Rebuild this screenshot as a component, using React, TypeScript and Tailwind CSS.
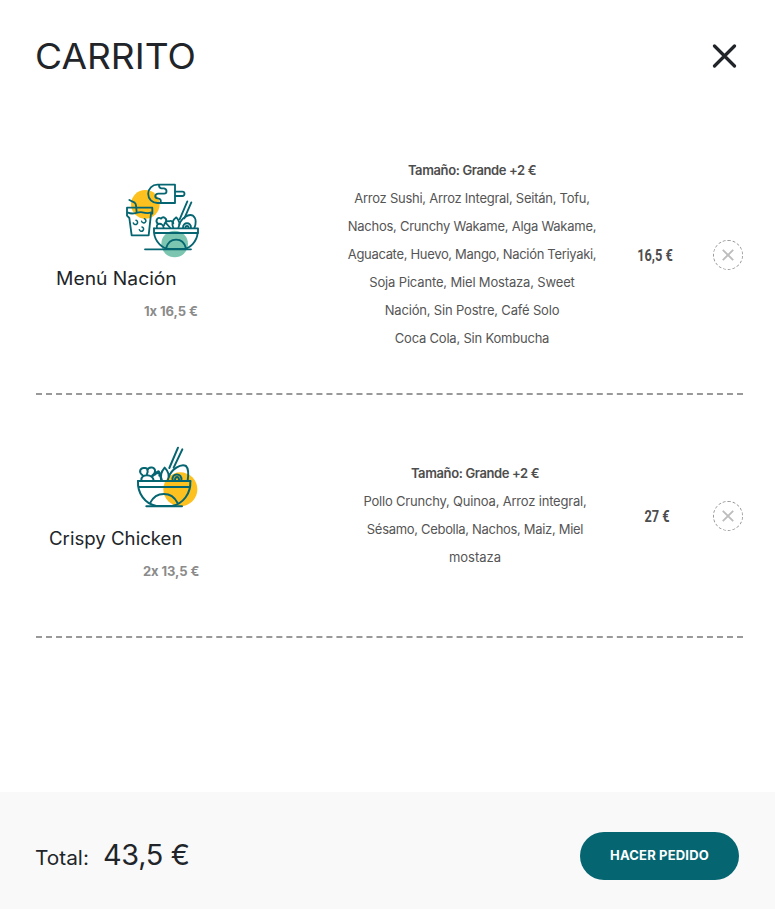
import type { ReactNode } from "react";

const TEAL = "#056571";

function ComboIcon() {
  return (
    <svg width="74" height="76" viewBox="48 36 222 228" fill="none" stroke={TEAL} strokeWidth="5.5" strokeLinecap="round" strokeLinejoin="round">
      <circle cx="106" cy="103" r="43" fill="#fcc01f" stroke="none" />
      <circle cx="194" cy="222" r="40" fill="#7cc5b1" stroke="none" />
      {/* ice lolly */}
      <path d="M195 44H142a27.500 27.500 0 0 0 0 55H195Z" />
      <path d="M196 65H217a6.500 6.500 0 0 1 0 13H196" />
      <path d="M147 45C147 51 148 54 154 55H162C172 57 172 70 162 71H145C133 72 133 84 143 85C151 86 154 90 152 98" />
      {/* drink */}
      <path d="M51 113H127V131H123L116 196H65L58 144L51 137Z" />
      <path d="M54 128C72 136 81 124 97 127C109 130 115 131 124 127" />
      <path d="M58 90L74 98Q77 100 78 106L80 126" />
      <path strokeWidth="4.6" d="M78 151a6.500 6.500 0 1 1 -8 8M103 146a6.500 6.500 0 1 1 -8 8M96 171a6.500 6.500 0 1 1 -8 8" />
      {/* bowl */}
      <path d="M132 175H264V189H136" />
      <path d="M132 175V188C135 217 159 236 177 237H221C239 235 261 216 263 188" />
      <path d="M105 238H243M168 235C178 200 219 200 228 235" />
      <path d="M232 94L209 148M244 97L223 145" />
      <path d="M141 174C136 157 160 157 161 174M144 162C133 151 145 138 153 146C160 137 173 146 167 156M162 166C164 157 171 151 178 154C184 150 189 156 190 160M166 157L181 174" />
      <path d="M190 174C183 158 192 147 199 142C207 150 211 162 205 174" />
      <path d="M208 164C213 145 235 130 249 137C260 145 258 163 253 174" />
      <path d="M219 174C218 155 244 155 243 174M226 174C226 166 236 166 236 174" />
    </svg>
  );
}

function BowlIcon() {
  return (
    <svg width="62" height="63" viewBox="48 30 186 189" fill="none" stroke={TEAL} strokeWidth="6" strokeLinecap="round" strokeLinejoin="round">
      <circle cx="181" cy="163" r="51" fill="#fcc01f" stroke="none" />
      <path d="M54 138H211M209 156H58" />
      <path d="M54 138C52 174 74 206 109 213H156C190 206 213 175 211 138" />
      <path d="M79 214H186M91 203C108 168 155 168 172 203" />
      <path d="M174 38L148 99M187 43L161 98" />
      <path d="M64 137C61 115 99 115 101 137M68 121C54 111 61 97 74 99C83 98 85 107 81 117M82 106C86 93 107 96 105 109C105 114 101 119 97 121M98 123C105 116 110 112 119 113L124 137M106 118C112 106 120 104 118 122" />
      <path d="M126 137C117 119 127 106 134 98C145 109 150 122 143 137" />
      <path d="M147 125C154 104 182 85 198 93C208 103 205 123 203 137" />
      <path d="M158 137C153 112 188 112 184 137M165 137C164 122 178 122 177 137" />
    </svg>
  );
}

function Line({ className, children }: { className: string; children: ReactNode }) {
  return <span className={`block whitespace-nowrap ${className}`}>{children}</span>;
}

function RemoveButton() {
  return (
    <button aria-label="Eliminar" className="ml-auto flex size-[30px] items-center justify-center rounded-full border border-dashed border-[#999]">
      <svg width="12" height="12" viewBox="0 0 12 12" stroke="#bdbdbd" strokeWidth="1.9">
        <path d="M.8.8 11.2 11.2M11.200.8.8 11.2" />
      </svg>
    </button>
  );
}

export default function App() {
  return (
    <div className="flex h-[909px] w-[775px] flex-col bg-white font-['Inter',sans-serif] text-[#212529] [font-feature-settings:'calt'_0]">
      <header className="flex h-[117px] items-start justify-between pt-[35px] pr-[38px] pl-[35px]">
        <h1 className="origin-left scale-x-[1.06] text-[35px] leading-[42px]">CARRITO</h1>
        <button aria-label="Cerrar" className="mt-[9px]">
          <svg width="25" height="25" viewBox="0 0 25 25" stroke="#212529" strokeWidth="3.2" strokeLinecap="round">
            <path d="M2.500 2 22.500 22M22.500 2 2.500 22" />
          </svg>
        </button>
      </header>

      <main className="mr-8 ml-9 flex-1">
        <article className="grid h-[278px] grid-cols-[300px_272px_94px_1fr] items-center border-b-2 border-dashed border-[#999]">
          <div className="self-start pt-[65px]">
            <div className="pl-[90px]"><ComboIcon /></div>
            <h2 className="mt-[7px] ml-[20px] origin-left scale-x-[1.07] text-[18px] leading-7">Menú Nación</h2>
            <p className="mt-[4px] pl-[108px] text-[13px] leading-7 font-bold tracking-[-0.06px] text-[#8b8b8b]">1x 16,5 €</p>
          </div>
          <div className="pb-[2px] text-center text-[13px] leading-7 text-[#555]">
            <Line className="font-semibold tracking-[-0.38px] text-[#4d4d4d]">Tamaño: Grande +2 €</Line>
            <Line className="tracking-[-0.26px]">Arroz Sushi, Arroz Integral, Seitán, Tofu,</Line>
            <Line className="tracking-[-0.26px]">Nachos, Crunchy Wakame, Alga Wakame,</Line>
            <Line className="tracking-[-0.32px]">Aguacate, Huevo, Mango, Nación Teriyaki,</Line>
            <Line className="tracking-[-0.16px]">Soja Picante, Miel Mostaza, Sweet</Line>
            <Line className="tracking-[-0.18px]">Nación, Sin Postre, Café Solo</Line>
            <Line className="tracking-[-0.21px]">Coca Cola, Sin Kombucha</Line>
          </div>
          <p className="scale-x-[0.8] pt-[2px] text-center font-['Roboto',sans-serif] text-[16px] leading-6 font-bold text-[#4d4d4d]">16,5 €</p>
          <RemoveButton />
        </article>

        <article className="grid h-[243px] grid-cols-[303px_272px_92px_1fr] items-center border-b-2 border-dashed border-[#999]">
          <div className="self-start pt-[50px]">
            <div className="pl-[100px]"><BowlIcon /></div>
            <h2 className="mt-[17px] ml-[13px] origin-left scale-x-[1.035] text-[18px] leading-7">Crispy Chicken</h2>
            <p className="mt-[4px] pl-[107px] text-[13px] leading-7 font-bold tracking-[-0.1px] text-[#8b8b8b]">2x 13,5 €</p>
          </div>
          <div className="pb-[2px] text-center text-[13px] leading-7 text-[#555]">
            <Line className="font-semibold tracking-[-0.38px] text-[#4d4d4d]">Tamaño: Grande +2 €</Line>
            <Line className="tracking-[-0.19px]">Pollo Crunchy, Quinoa, Arroz integral,</Line>
            <Line className="tracking-[-0.31px]">Sésamo, Cebolla, Nachos, Maiz, Miel</Line>
            <Line className="tracking-normal">mostaza</Line>
          </div>
          <p className="scale-x-[0.8] pt-[2px] text-center font-['Roboto',sans-serif] text-[16px] leading-6 font-bold text-[#4d4d4d]">27 €</p>
          <RemoveButton />
        </article>
      </main>

      <footer className="flex h-[117px] items-center justify-between bg-[#f9f9f9] pt-[11px] pr-9 pb-0 pl-[35px]">
        <div className="-mt-[2px] flex items-baseline gap-[16px]">
          <span className="origin-left scale-x-[1.04] text-[20px] leading-7">Total:</span>
          <span className="origin-left scale-x-[1.03] text-[28px] leading-9 tracking-[-0.3px]">43,5 €</span>
        </div>
        <button className="h-12 w-[159px] rounded-full bg-[#056571] text-[13px] font-bold tracking-[0.18px] text-white">HACER PEDIDO</button>
      </footer>
    </div>
  );
}
